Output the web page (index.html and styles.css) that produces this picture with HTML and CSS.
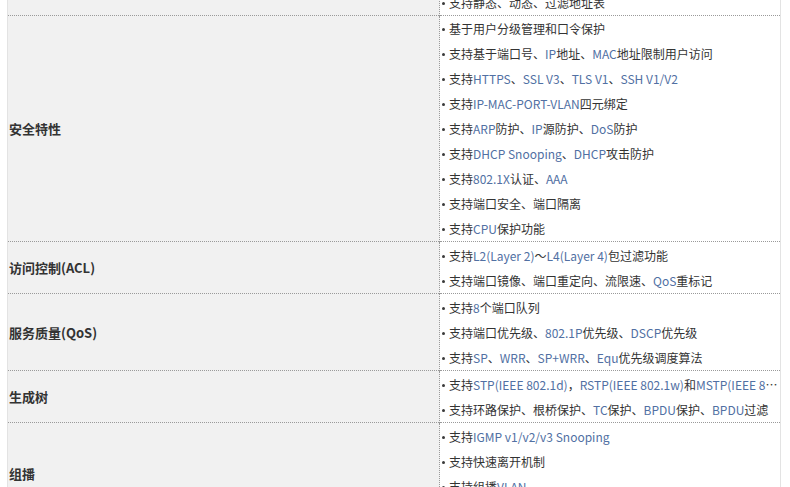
FILE: index.html
```html
<!DOCTYPE html>
<html lang="zh-CN">
<head>
<meta charset="utf-8">
<link rel="stylesheet" href="styles.css">
</head>
<body>
<table class="spec">
  <tr>
    <th class="label"></th>
    <td class="items">
      <div class="item">支持静态、动态、过滤地址表</div>
    </td>
  </tr>
  <tr>
    <th class="label">安全特性</th>
    <td class="items">
      <div class="item">基于用户分级管理和口令保护</div>
      <div class="item">支持基于端口号、<span class="en">IP</span>地址、<span class="en">MAC</span>地址限制用户访问</div>
      <div class="item">支持<span class="en">HTTPS</span>、<span class="en">SSL V3</span>、<span class="en">TLS V1</span>、<span class="en">SSH V1/V2</span></div>
      <div class="item">支持<span class="en">IP-MAC-PORT-VLAN</span>四元绑定</div>
      <div class="item">支持<span class="en">ARP</span>防护、<span class="en">IP</span>源防护、<span class="en">DoS</span>防护</div>
      <div class="item">支持<span class="en">DHCP Snooping</span>、<span class="en">DHCP</span>攻击防护</div>
      <div class="item">支持<span class="en">802.1X</span>认证、<span class="en">AAA</span></div>
      <div class="item">支持端口安全、端口隔离</div>
      <div class="item">支持<span class="en">CPU</span>保护功能</div>
    </td>
  </tr>
  <tr>
    <th class="label">访问控制(ACL)</th>
    <td class="items pad">
      <div class="item">支持<span class="en">L2(Layer 2)</span>～<span class="en">L4(Layer 4)</span>包过滤功能</div>
      <div class="item">支持端口镜像、端口重定向、流限速、<span class="en">QoS</span>重标记</div>
    </td>
  </tr>
  <tr>
    <th class="label">服务质量(QoS)</th>
    <td class="items pad">
      <div class="item">支持<span class="en">8</span>个端口队列</div>
      <div class="item">支持端口优先级、<span class="en">802.1P</span>优先级、<span class="en">DSCP</span>优先级</div>
      <div class="item">支持<span class="en">SP</span>、<span class="en">WRR</span>、<span class="en">SP+WRR</span>、<span class="en">Equ</span>优先级调度算法</div>
    </td>
  </tr>
  <tr>
    <th class="label">生成树</th>
    <td class="items pad">
      <div class="item">支持<span class="en">STP(IEEE 802.1d)</span>，<span class="en">RSTP(IEEE 802.1w)</span>和<span class="en">MSTP(IEEE 802.1s)</span></div>
      <div class="item">支持环路保护、根桥保护、<span class="en">TC</span>保护、<span class="en">BPDU</span>保护、<span class="en">BPDU</span>过滤</div>
    </td>
  </tr>
  <tr>
    <th class="label">组播</th>
    <td class="items pad">
      <div class="item">支持<span class="en">IGMP v1/v2/v3 Snooping</span></div>
      <div class="item">支持快速离开机制</div>
      <div class="item">支持组播<span class="en">VLAN</span></div>
      <div class="item">支持未知组播丢弃</div>
    </td>
  </tr>
</table>
</body>
</html>
```
FILE: styles.css
```css
html, body {
  margin: 0;
  padding: 0;
  background: #ffffff;
}
body {
  padding-left: 7px;
  font-family: "Noto Sans CJK SC", "Noto Sans", sans-serif;
  font-size: 12px;
  color: #333333;
}
.spec {
  border-collapse: collapse;
  margin-top: -10px;
  width: 774px;
  table-layout: fixed;
  border-left: 1px solid #e3e3e3;
  border-right: 1px solid #e3e3e3;
}
.spec tr {
  border-bottom: 1px dotted #9a9a9a;
}
.label {
  width: 430px;
  background: #f1f1f1;
  text-align: left;
  vertical-align: middle;
  font-size: 13px;
  font-weight: bold;
  color: #333333;
  padding: 0 0 0 1px;
}
.items {
  border-left: 1px dotted #9a9a9a;
  padding: 0 0 0 2px;
  vertical-align: top;
  background: #ffffff;
}
.items.pad {
  padding-top: 1px;
}
.item {
  height: 25px;
  line-height: 25px;
  white-space: nowrap;
  overflow: hidden;
  text-overflow: ellipsis;
  color: #333333;
}
.item::before {
  content: "";
  display: inline-block;
  width: 3px;
  height: 3px;
  border-radius: 50%;
  background: #3a3a3a;
  margin-right: 4px;
  vertical-align: middle;
  position: relative;
  top: -1px;
}
.en {
  color: #5170a3;
}
```
